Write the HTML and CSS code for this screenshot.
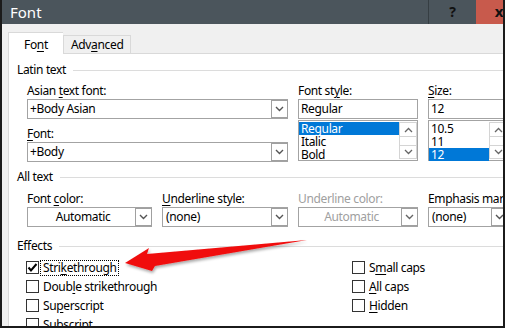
FILE: index.html
```html
<!DOCTYPE html>
<html>
<head>
<meta charset="utf-8">
<link rel="stylesheet" href="styles.css">
</head>
<body>
<div class="window">
  <div class="titlebar">
    <span class="title">Font</span>
    <div class="help">?</div>
    <div class="close">x</div>
  </div>
  <div class="client">
    <div class="tabs">
      <div class="tab active">Fo<u>n</u>t</div>
      <div class="tab">Adv<u>a</u>nced</div>
    </div>
    <div class="panel">
      <div class="group"><span>Latin text</span><i class="rule"></i></div>
      <div class="latin">
        <div class="col col-font">
          <label>Asian <u>t</u>ext font:</label>
          <div class="box combo"><span class="val">+Body Asian</span><span class="drop"><svg width="9" height="6" viewBox="0 0 9 6"><polyline points="1,1 4.5,4.5 8,1" fill="none" stroke="#555" stroke-width="1.4"/></svg></span></div>
          <label class="lbl2"><u>F</u>ont:</label>
          <div class="box combo"><span class="val">+Body</span><span class="drop"><svg width="9" height="6" viewBox="0 0 9 6"><polyline points="1,1 4.5,4.5 8,1" fill="none" stroke="#555" stroke-width="1.4"/></svg></span></div>
        </div>
        <div class="col col-style">
          <label>Font st<u>y</u>le:</label>
          <div class="box"><span class="val">Regular</span></div>
          <div class="list">
            <div class="items">
              <div class="item sel">Regular</div>
              <div class="item">Italic</div>
              <div class="item">Bold</div>
            </div>
            <div class="sb">
              <span class="sbb up"><svg width="9" height="6" viewBox="0 0 9 6"><polyline points="1,5 4.5,1.5 8,5" fill="none" stroke="#666" stroke-width="1.3"/></svg></span>
              <span class="sbt"></span>
              <span class="sbb dn"><svg width="9" height="6" viewBox="0 0 9 6"><polyline points="1,1 4.5,4.5 8,1" fill="none" stroke="#666" stroke-width="1.3"/></svg></span>
            </div>
          </div>
        </div>
        <div class="col col-size">
          <label><u>S</u>ize:</label>
          <div class="box"><span class="val">12</span></div>
          <div class="list">
            <div class="items">
              <div class="item">10.5</div>
              <div class="item">11</div>
              <div class="item sel">12</div>
            </div>
            <div class="sb">
              <span class="sbb up"><svg width="9" height="6" viewBox="0 0 9 6"><polyline points="1,5 4.5,1.5 8,5" fill="none" stroke="#666" stroke-width="1.3"/></svg></span>
              <span class="sbt"></span>
              <span class="sbb dn"><svg width="9" height="6" viewBox="0 0 9 6"><polyline points="1,1 4.5,4.5 8,1" fill="none" stroke="#666" stroke-width="1.3"/></svg></span>
            </div>
          </div>
        </div>
      </div>

      <div class="group g2"><span>All text</span><i class="rule"></i></div>
      <div class="alltext">
        <div class="col">
          <label>Font <u>c</u>olor:</label>
          <div class="box combo"><span class="val center">Automatic</span><span class="drop"><svg width="9" height="6" viewBox="0 0 9 6"><polyline points="1,1 4.5,4.5 8,1" fill="none" stroke="#555" stroke-width="1.4"/></svg></span></div>
        </div>
        <div class="col">
          <label><u>U</u>nderline style:</label>
          <div class="box combo"><span class="val">(none)</span><span class="drop"><svg width="9" height="6" viewBox="0 0 9 6"><polyline points="1,1 4.5,4.5 8,1" fill="none" stroke="#555" stroke-width="1.4"/></svg></span></div>
        </div>
        <div class="col disabled">
          <label>Underline color:</label>
          <div class="box combo"><span class="val center">Automatic</span><span class="drop"><svg width="9" height="6" viewBox="0 0 9 6"><polyline points="1,1 4.5,4.5 8,1" fill="none" stroke="#666" stroke-width="1.4"/></svg></span></div>
        </div>
        <div class="col">
          <label>Emphasis mark:</label>
          <div class="box combo"><span class="val">(none)</span><span class="drop"><svg width="9" height="6" viewBox="0 0 9 6"><polyline points="1,1 4.5,4.5 8,1" fill="none" stroke="#555" stroke-width="1.4"/></svg></span></div>
        </div>
      </div>

      <div class="group g3"><span>Effects</span><i class="rule"></i></div>
      <div class="effects">
        <div class="ecol left">
          <div class="chk"><span class="cb"><svg width="11" height="11" viewBox="0 0 11 11"><polyline points="1.5,5.5 4,8.5 9.5,2" fill="none" stroke="#000" stroke-width="2"/></svg></span><span class="txt focus">Stri<u>k</u>ethrough</span></div>
          <div class="chk"><span class="cb"></span><span class="txt">Doub<u>l</u>e strikethrough</span></div>
          <div class="chk"><span class="cb"></span><span class="txt">Su<u>p</u>erscript</span></div>
          <div class="chk"><span class="cb"></span><span class="txt">Su<u>b</u>script</span></div>
        </div>
        <div class="ecol">
          <div class="chk"><span class="cb"></span><span class="txt">S<u>m</u>all caps</span></div>
          <div class="chk"><span class="cb"></span><span class="txt"><u>A</u>ll caps</span></div>
          <div class="chk"><span class="cb"></span><span class="txt"><u>H</u>idden</span></div>
        </div>
      </div>
    </div>
  </div>
  <svg class="arrow" width="505" height="328" viewBox="0 0 505 328">
    <defs>
      <filter id="sh" x="-10%" y="-50%" width="130%" height="200%">
        <feGaussianBlur in="SourceAlpha" stdDeviation="1.6"/>
        <feOffset dx="1" dy="2" result="b"/>
        <feComponentTransfer><feFuncA type="linear" slope="0.35"/></feComponentTransfer>
        <feMerge><feMergeNode/><feMergeNode in="SourceGraphic"/></feMerge>
      </filter>
    </defs>
    <polygon points="125,263 149,248 147,254 307,240 155,266 152,271" fill="#f01010" filter="url(#sh)"/>
  </svg>
</div>
</body>
</html>
```

FILE: styles.css
```css
* { box-sizing: border-box; }
html, body { margin: 0; padding: 0; background: #fff; }
body {
  font-family: "Noto Sans", "Open Sans", sans-serif;
  font-size: 12px;
  letter-spacing: -0.35px;
  color: #000;
}
u { text-decoration: underline; text-underline-offset: 2px; }

.window {
  position: relative;
  width: 505px;
  height: 328px;
  overflow: hidden;
  border: 2px solid #1b1b1b;
  border-top: none;
  background: #f0f0f0;
  display: flex;
  flex-direction: column;
}

.titlebar {
  flex: none;
  height: 24px;
  background: #4b555c;
  display: flex;
  overflow: hidden;
}
.title {
  flex: none;
  width: 426px;
  color: #fff;
  font-size: 15px;
  letter-spacing: 0;
  line-height: 24px;
  padding-left: 8px;
}
.help {
  flex: none;
  width: 48px;
  border-left: 1px solid #363e43;
  color: #111;
  font-weight: bold;
  font-size: 14px;
  line-height: 24px;
  text-align: center;
}
.close {
  flex: none;
  width: 46px;
  background: #c85a4c;
  color: #111;
  font-weight: bold;
  font-size: 15px;
  line-height: 22px;
  text-align: center;
}

.client {
  flex: 1;
  min-height: 0;
  padding-left: 6px;
  display: flex;
  flex-direction: column;
}

.tabs {
  flex: none;
  height: 30px;
  margin-bottom: -1px;
  display: flex;
  align-items: flex-end;
  position: relative;
  z-index: 1;
}
.tab {
  height: 19px;
  padding: 0 7px;
  border: 1px solid #d9d9d9;
  background: #f0f0f0;
  line-height: 17px;
}
.tab.active {
  width: 55px;
  height: 22px;
  padding: 3px 0 0;
  text-align: center;
  background: #fff;
  border-bottom: none;
  border-right: none;
}

.panel {
  flex: 1;
  min-height: 0;
  background: #fff;
  border: 1px solid #d9d9d9;
  border-right: none;
  border-bottom: none;
  padding-left: 8px;
}

.group {
  height: 16px;
  line-height: 16px;
  display: flex;
  align-items: center;
  gap: 7px;
  margin-top: 8px;
}
.group .rule {
  flex: 1;
  height: 0;
  border-top: 1px solid #dcdcdc;
}
.group.g2 { margin-top: 7px; }
.group.g3 { margin-top: 11px; }

label {
  display: block;
  height: 17px;
  line-height: 17px;
  white-space: nowrap;
}
.lbl2 { margin-top: 6px; }

.latin {
  display: flex;
  gap: 10px;
  padding-left: 10px;
  margin-top: 4px;
}
.col-font { width: 261px; flex: none; }
.col-style { width: 120px; flex: none; }
.col-size { width: 80px; flex: none; }

.box {
  height: 20px;
  border: 1px solid #a3a3a3;
  display: flex;
  align-items: center;
  background: #fff;
  white-space: nowrap;
}
.box .val {
  flex: 1;
  padding-left: 2px;
  line-height: 18px;
  overflow: hidden;
}
.box .val.center { text-align: center; }
.drop {
  flex: none;
  width: 17px;
  height: 18px;
  border: 1px solid #a0a0a0;
  margin-right: -1px;
  display: flex;
  align-items: center;
  justify-content: center;
  background: #fff;
}

.list {
  margin-top: 1px;
  height: 41px;
  border: 1px solid #a3a3a3;
  display: flex;
}
.items { flex: 1; padding-top: 1px; }
.item {
  height: 13px;
  line-height: 13px;
  padding-left: 2px;
}
.item.sel { background: #0078d7; color: #fff; }
.sb {
  flex: none;
  width: 18px;
  display: flex;
  flex-direction: column;
  padding: 1px 0 1px 0;
}
.sbb {
  height: 15px;
  border: 1px solid #d4d4d4;
  display: flex;
  align-items: center;
  justify-content: center;
}
.sbt {
  flex: 1;
  border-left: 1px solid #d4d4d4;
  border-right: 1px solid #d4d4d4;
}
.sbb.dn { height: 14px; }

.alltext {
  display: grid;
  grid-template-columns: 125px 126px 120px 80px;
  column-gap: 10px;
  padding-left: 10px;
  margin-top: 5px;
}
.alltext .combo { height: 20px; }
.alltext .val { padding-left: 3px; }
.disabled label, .disabled .val { color: #a0a0a0; }

.effects {
  display: flex;
  padding-left: 9px;
  margin-top: 4px;
}
.ecol.left { width: 326px; flex: none; }
.chk {
  height: 19px;
  display: flex;
  align-items: center;
  white-space: nowrap;
}
.cb {
  flex: none;
  width: 13px;
  height: 13px;
  border: 1px solid #333;
  display: flex;
  align-items: center;
  justify-content: center;
  background: #fff;
}
.txt {
  margin-left: 1px;
  padding: 0 1px 0 2px;
  height: 16px;
  line-height: 14px;
  border: 1px solid transparent;
}
.txt.focus { border: 1px dotted #000; }

.arrow {
  position: absolute;
  left: -2px;
  top: 0;
  pointer-events: none;
}
```
